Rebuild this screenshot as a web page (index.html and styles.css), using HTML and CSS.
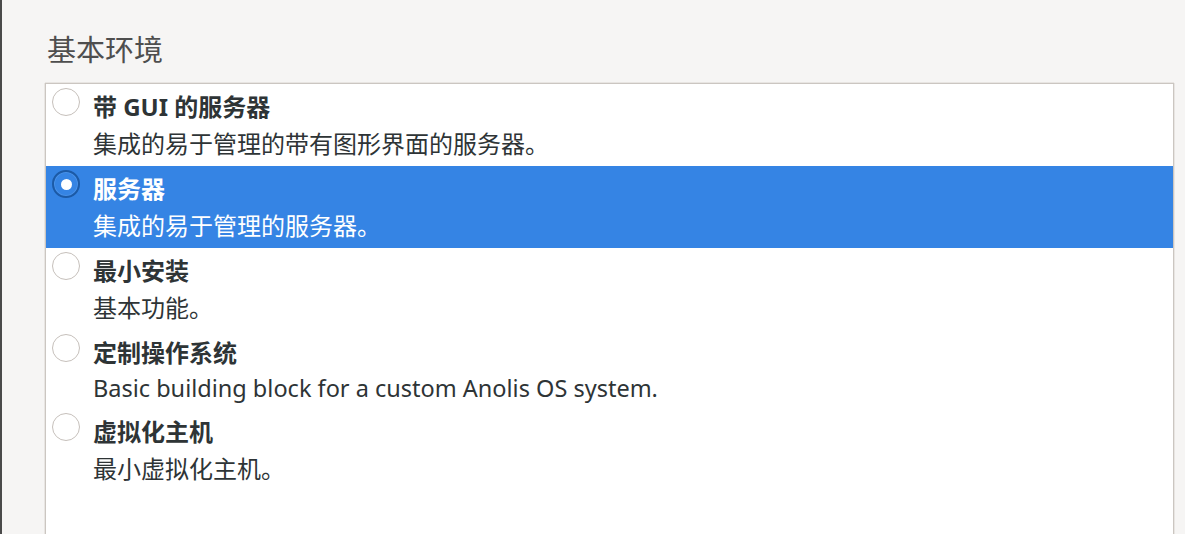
FILE: index.html
```html
<!DOCTYPE html>
<html lang="zh-CN">
<head>
<meta charset="utf-8">
<link rel="stylesheet" href="styles.css">
</head>
<body>
<div class="page">
  <h2 class="heading">基本环境</h2>
  <div class="list">
    <div class="row">
      <span class="radio"></span>
      <div class="text">
        <div class="title">带 GUI 的服务器</div>
        <div class="desc">集成的易于管理的带有图形界面的服务器。</div>
      </div>
    </div>
    <div class="row selected">
      <span class="radio checked"></span>
      <div class="text">
        <div class="title">服务器</div>
        <div class="desc">集成的易于管理的服务器。</div>
      </div>
    </div>
    <div class="row">
      <span class="radio"></span>
      <div class="text">
        <div class="title">最小安装</div>
        <div class="desc">基本功能。</div>
      </div>
    </div>
    <div class="row">
      <span class="radio"></span>
      <div class="text">
        <div class="title">定制操作系统</div>
        <div class="desc latin">Basic building block for a custom Anolis OS system.</div>
      </div>
    </div>
    <div class="row">
      <span class="radio"></span>
      <div class="text">
        <div class="title">虚拟化主机</div>
        <div class="desc">最小虚拟化主机。</div>
      </div>
    </div>
  </div>
</div>
</body>
</html>
```

FILE: styles.css
```css
html, body {
  margin: 0;
  padding: 0;
  height: 100%;
  overflow: hidden;
}
body {
  background: #f6f5f4;
  font-family: "Noto Sans", "Noto Sans CJK SC", sans-serif;
  color: #2e3436;
}
.page {
  height: 100%;
  display: flex;
  flex-direction: column;
  border-left: 2px solid #4a4a4a;
  padding: 0 11px 0 43px;
  box-sizing: border-box;
}
.heading {
  margin: 0 0 13px 0;
  padding: 30px 0 0 2px;
  font-size: 29px;
  line-height: 40px;
  font-weight: normal;
  color: #4e4e4e;
  flex: none;
}
.list {
  flex: 1;
  min-height: 0;
  background: #ffffff;
  border: 1px solid #cbc6c1;
  border-bottom: none;
  box-shadow: 1px 0 0 #e8e5e2, -1px 0 0 #e8e5e2, 0 -1px 0 #e8e5e2;
}
.row {
  display: flex;
  align-items: flex-start;
  padding: 5px 0 3px 6px;
}
.row.selected {
  background: #3584e4;
  color: #ffffff;
}
.radio {
  width: 28px;
  height: 28px;
  border-radius: 50%;
  border: 1px solid #c6c0bb;
  background: #ffffff;
  margin-top: -1px;
  flex: none;
  box-sizing: border-box;
  position: relative;
}
.radio.checked {
  background: #3584e4;
  border: 2px solid #1c5aa6;
  box-shadow: inset 0 0 0 1px #4a92e8;
}
.radio.checked::after {
  content: "";
  position: absolute;
  left: 50%;
  top: 50%;
  width: 11px;
  height: 11px;
  margin: -5.5px 0 0 -5.5px;
  border-radius: 50%;
  background: #ffffff;
}
.text {
  margin-left: 13px;
}
.title {
  font-size: 24px;
  line-height: 36px;
  font-weight: bold;
}
.desc {
  font-size: 24px;
  line-height: 38px;
}
.desc.latin {
  font-size: 23.5px;
  line-height: 35px;
}
```
